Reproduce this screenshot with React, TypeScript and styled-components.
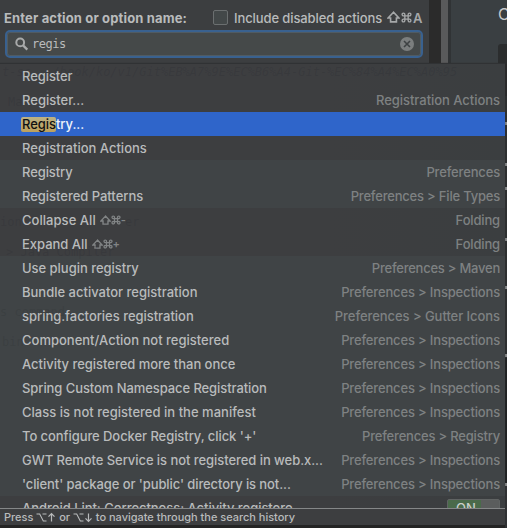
import React from 'react';
import styled, { createGlobalStyle } from 'styled-components';

const GlobalStyle = createGlobalStyle`
  * { box-sizing: border-box; }
  body { margin: 0; background: #2b2b2b; }
`;

const Screen = styled.div`
  position: relative;
  display: flex;
  width: 507px;
  height: 528px;
  overflow: hidden;
  background: #242424;
  font: 500 13px/24px Inter, "Liberation Sans", sans-serif;
  color: #b9bbbc;
`;

const Dialog = styled.header`
  width: 429px;
  height: 64px;
  flex: none;
  background: #3c3e40;
`;

const TitleBar = styled.div`
  display: flex;
  align-items: center;
  height: 30px;
  padding: 5px 0 0 4px;
  white-space: pre;
`;

const Title = styled.span`
  width: 209px;
  font-weight: 700;
  letter-spacing: 0.15px;
`;

const Checkbox = styled.span`
  width: 15px;
  height: 15px;
  margin-right: 6px;
  border: 1px solid #6b6f70;
  border-radius: 2px;
  background: #434849;
`;

const CheckLabel = styled.span`
  width: 153px;
  letter-spacing: -0.1px;
`;

const Keys = styled.span<{ $small?: boolean }>`
  display: inline-flex;
  align-items: center;
  gap: ${p => (p.$small ? 0 : 1)}px;
  height: 24px;
  color: ${p => (p.$small ? '#818485' : '#a6a8a9')};
  font-size: ${p => (p.$small ? '11px' : '13px')};
  font-weight: 600;
  letter-spacing: 0;
`;

const SearchField = styled.div`
  display: flex;
  align-items: center;
  width: 418px;
  height: 28px;
  margin-left: 5px;
  padding: 0 7px 0 8px;
  border: 2px solid #39618f;
  border-radius: 5px;
  background: #454949;
  box-shadow: inset 0 0 0 1px #505b62;
`;

const Query = styled.span`
  flex: 1;
  margin-left: 3px;
  font: 12px/24px "DejaVu Sans Mono", monospace;
  letter-spacing: -0.5px;
`;

const Editor = styled.div`
  flex: none;
  width: 12px;
  height: 64px;
  background: #2b2b2b;
`;

const Divider = styled.div`
  flex: none;
  width: 7px;
  height: 64px;
  background: #595a5b;
`;

const Page = styled.aside`
  flex: 1;
  min-width: 0;
  overflow: hidden;
  border-left: 3px solid #303335;
  background: #3a3f42;
  height: 64px;
  padding: 2px 0 0 47px;
  font-size: 16px;
  font-weight: 400;
  color: #c7c9ca;
`;

const CodeBlock = styled.div`
  width: 12px;
  height: 20px;
  margin-top: 18px;
  border-radius: 3px 0 0 0;
  background: #2b2d2e;
`;

const PageEdge = styled.div`
  position: absolute;
  left: 505px;
  top: 64px;
  width: 2px;
  height: 464px;
  background: linear-gradient(#292a2b 0 32px, #2d3031 32px 294px, #202223 294px 420px, #303234 420px);
`;

const EdgeMark = styled.i<{ $y: number }>`
  position: absolute;
  left: 505px;
  top: ${p => p.$y}px;
  width: 2px;
  height: 3px;
  background: #898b8c;
`;

const Popup = styled.section`
  position: absolute;
  left: 0;
  top: 64px;
  width: 505px;
  height: 461px;
  display: flex;
  flex-direction: column;
  background: #3d3e40;
  box-shadow: 0 -1px 1px #303234;
`;

const Results = styled.div`
  height: 444px;
  flex: none;
  overflow: hidden;
`;

const Row = styled.div<{ $tone: 'action' | 'option' | 'selected' }>`
  display: flex;
  justify-content: space-between;
  height: 24px;
  padding: 0 5px 0 22px;
  white-space: pre;
  background: ${p => ({ action: 'linear-gradient(90deg, #3d3e40 65%, #3b3e40)', option: '#404446', selected: '#2f65ca' })[p.$tone]};
  color: ${p => (p.$tone === 'selected' ? '#f0f3fa' : '#b9bbbc')};
`;

const Name = styled.span<{ $spacing?: number }>`
  display: flex;
  gap: 4px;
  letter-spacing: ${p => p.$spacing ?? 0}px;
`;

const Category = styled.span<{ $spacing?: number }>`
  color: #7e8182;
  letter-spacing: ${p => p.$spacing ?? -0.16}px;
`;

const Match = styled.mark`
  height: 15px;
  margin: 5px -4px 0 -1px;
  padding-left: 1px;
  border-radius: 2px;
  background: linear-gradient(#bcb184, #bda15c);
  color: #111;
  line-height: 15px;
`;

const Ghost = styled.span<{ $x: number; $y: number; $italic?: boolean }>`
  position: absolute;
  left: ${p => p.$x}px;
  top: ${p => p.$y}px;
  font: ${p => (p.$italic ? 'italic' : 'normal')} 12px/16px "DejaVu Sans Mono", monospace;
  color: rgba(22, 28, 32, 0.12);
  white-space: pre;
  pointer-events: none;
`;

const ToggleSwitch = styled.span`
  align-self: flex-start;
  width: 53px;
  height: 22px;
  margin: 3px 0 0;
  border: 1px solid #606363;
  border-radius: 2px;
  background: linear-gradient(90deg, #4a6a4a 65%, #5b5d5d 65%);
  color: #c9cfca;
  padding-left: 8px;
  line-height: 16px;
`;

const Footer = styled.footer`
  display: flex;
  align-items: center;
  height: 17px;
  padding: 1px 0 0 4px;
  border-top: 1px solid #858788;
  background: #3d3e40;
  font-size: 11px;
  line-height: 17px;
  letter-spacing: -0.02px;
  white-space: pre;
`;

const SearchIcon = () => (
  <svg width="14" height="14" viewBox="0 0 14 14" fill="none" stroke="#a8aaaa" strokeWidth="2">
    <circle cx="5.2" cy="5.4" r="3.9" /><path d="m8.1 8.4 4.2 4.2" strokeWidth="2.3" />
  </svg>
);

const ClearIcon = () => (
  <svg width="14" height="14" viewBox="0 0 14 14">
    <circle cx="7" cy="7" r="7" fill="#7b7e7e" />
    <path d="m4 4 6 6m0-6-6 6" stroke="#3e4243" strokeWidth="1.6" />
  </svg>
);

const ShiftIcon = ({ size = 13 }: { size?: number }) => (
  <svg width={size} height={size} viewBox="0 0 12 12" fill="none" stroke="currentColor" strokeWidth="1.5">
    <path d="M6 1.2 1 6.5h2.3V10h5.4V6.5H11Z" />
  </svg>
);

const CommandIcon = ({ size = 12 }: { size?: number }) => (
  <svg width={size} height={size} viewBox="0 0 12 12" fill="none" stroke="currentColor" strokeWidth="1.5">
    <path d="M4.2 4.2H2.8a1.5 1.5 0 1 1 1.4-1.5v6.6a1.5 1.5 0 1 1-1.4-1.5h6.4a1.5 1.5 0 1 1-1.4 1.5V2.7a1.5 1.5 0 1 1 1.4 1.5Z" />
  </svg>
);

const OptionIcon = () => (
  <svg width="11" height="11" viewBox="0 0 11 11" fill="none" stroke="currentColor" strokeWidth="1.1">
    <path d="M.5 2h3.2l3.6 7H10.5M6.5 2h4" />
  </svg>
);

const ArrowIcon = ({ down }: { down?: boolean }) => (
  <svg width="9" height="11" viewBox="0 0 9 11" fill="none" stroke="currentColor" strokeWidth="1.2">
    <path d={down ? 'M4.5 1.5v8M1.5 6.4l3 3 3-3' : 'M4.5 9.5v-8M1.5 4.6l3-3 3 3'} />
  </svg>
);

type Result = {
  name: string;
  category?: string;
  action?: boolean;
  shortcut?: string;
  match?: string;
  spacing?: number;
  categorySpacing?: number;
  toggle?: boolean;
};

const results: Result[] = [
  { name: 'Register', action: true, spacing: -0.08 },
  { name: 'Register...', category: 'Registration Actions', action: true, spacing: 0, categorySpacing: -0.04 },
  { name: 'try...', match: 'Regis', spacing: -0.05 },
  { name: 'Registration Actions', action: true },
  { name: 'Registry', category: 'Preferences', spacing: -0.1 },
  { name: 'Registered Patterns', category: 'Preferences > File Types', spacing: -0.03, categorySpacing: -0.2 },
  { name: 'Collapse All', category: 'Folding', action: true, shortcut: '-', spacing: 0.04 },
  { name: 'Expand All', category: 'Folding', action: true, shortcut: '+', spacing: -0.02 },
  { name: 'Use plugin registry', category: 'Preferences > Maven', spacing: -0.03, categorySpacing: -0.24 },
  { name: 'Bundle activator registration', category: 'Preferences > Inspections' },
  { name: 'spring.factories registration', category: 'Preferences > Gutter Icons', spacing: -0.03, categorySpacing: -0.06 },
  { name: 'Component/Action not registered', category: 'Preferences > Inspections', spacing: 0 },
  { name: 'Activity registered more than once', category: 'Preferences > Inspections', spacing: -0.03 },
  { name: 'Spring Custom Namespace Registration', category: 'Preferences > Inspections', spacing: -0.08 },
  { name: 'Class is not registered in the manifest', category: 'Preferences > Inspections', spacing: 0.02 },
  { name: "To configure Docker Registry, click '+'", category: 'Preferences > Registry', spacing: -0.07, categorySpacing: -0.2 },
  { name: 'GWT Remote Service is not registered in web.x...', category: 'Preferences > Inspections', spacing: -0.06 },
  { name: "'client' package or 'public' directory is not...", category: 'Preferences > Inspections', spacing: -0.09 },
  { name: 'Android Lint: Correctness: Activity registere...', action: true, toggle: true, spacing: -0.04 },
];

const ResultRow = ({ item }: { item: Result }) => (
  <Row $tone={item.match ? 'selected' : item.action ? 'action' : 'option'}>
    <Name $spacing={item.spacing}>
      {item.match && <Match>{item.match}</Match>}
      <span>{item.name}</span>
      {item.shortcut && <Keys $small><ShiftIcon size={11} /><CommandIcon size={10} />{item.shortcut}</Keys>}
    </Name>
    {item.category && <Category $spacing={item.categorySpacing}>{item.category}</Category>}
    {item.toggle && <ToggleSwitch>ON</ToggleSwitch>}
  </Row>
);

export default function App() {
  return (
    <>
      <GlobalStyle />
      <Screen>
        <Dialog>
          <TitleBar>
            <Title>Enter action or option name:</Title>
            <Checkbox />
            <CheckLabel>Include disabled actions</CheckLabel>
            <Keys><ShiftIcon /><CommandIcon size={11} />A</Keys>
          </TitleBar>
          <SearchField><SearchIcon /><Query>regis</Query><ClearIcon /></SearchField>
        </Dialog>
        <Editor />
        <Divider />
        <Page>C<CodeBlock /></Page>
        <PageEdge />
        {[122, 163, 187, 238, 286, 354, 483].map(y => <EdgeMark key={y} $y={y} />)}
        <Popup>
          <Results>{results.map(item => <ResultRow key={item.match ?? item.name} item={item} />)}</Results>
          <Footer>Press <OptionIcon /><ArrowIcon /> or <OptionIcon /><ArrowIcon down /> to navigate through the search history</Footer>
          <Ghost $x={2} $y={0} $italic>t-sc.../book/ko/v1/Git%EB%A7%9E%EC%B6%A4-Git-%EC%84%A4%EC%A0%95</Ghost>
          <Ghost $x={8} $y={30}>Ma</Ghost>
          <Ghost $x={0} $y={150}>ion</Ghost>
          <Ghost $x={125} $y={150}>er</Ghost>
          <Ghost $x={6} $y={180}>&gt; Java Compiler</Ghost>
          <Ghost $x={0} $y={240}>s command</Ghost>
          <Ghost $x={2} $y={270}>bin</Ghost>
        </Popup>
      </Screen>
    </>
  );
}
